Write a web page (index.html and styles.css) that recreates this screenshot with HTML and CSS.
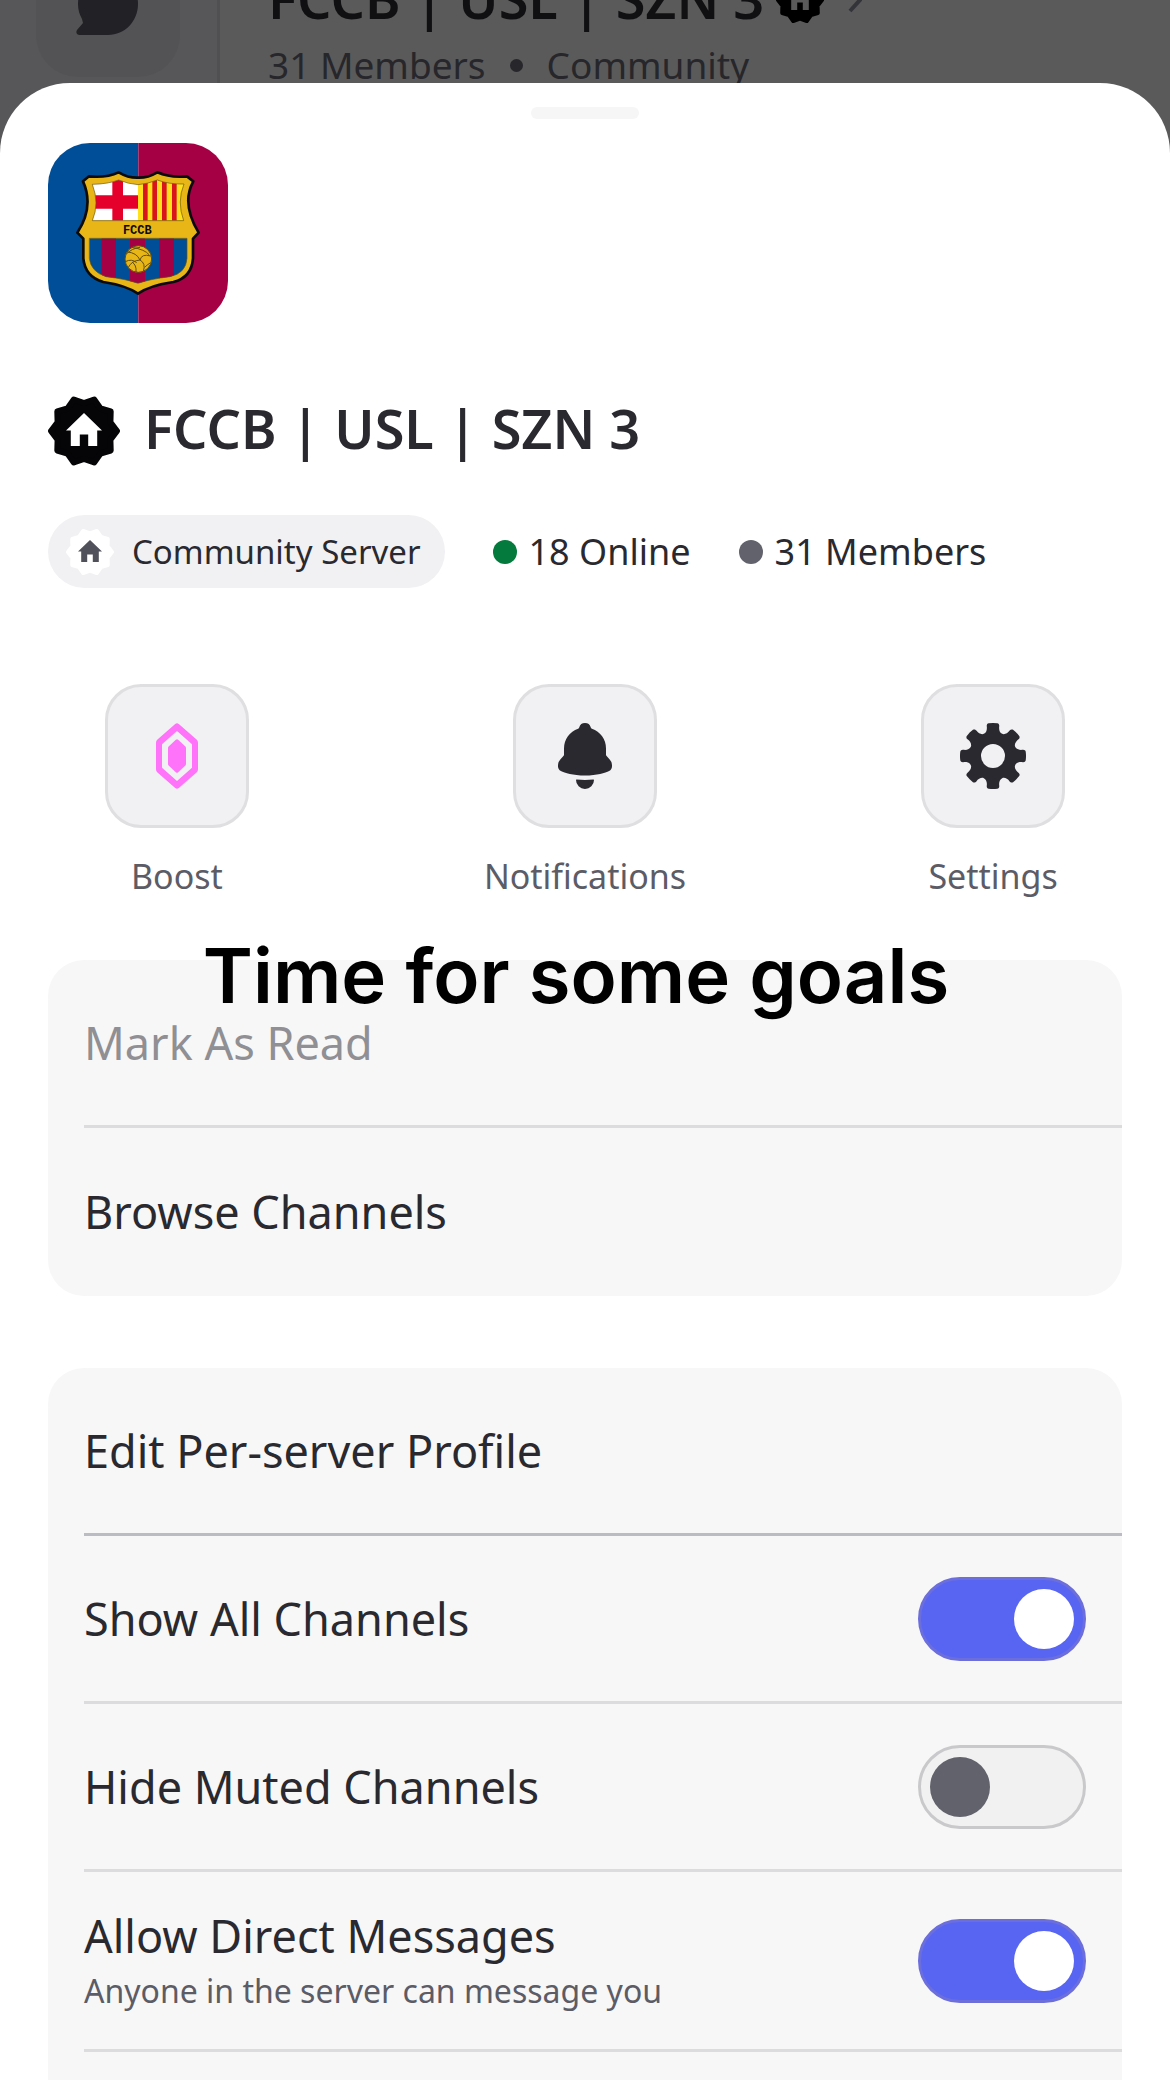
FILE: index.html
```html
<!DOCTYPE html>
<html lang="en">
<head>
    <meta charset="UTF-8">
    <meta name="viewport" content="width=device-width, initial-scale=1.0">
    <title>FCCB | USL | SZN 3</title>
    <link rel="stylesheet" href="styles.css">
</head>
<body>
    <!-- Shared icon shapes -->
    <svg class="defs" aria-hidden="true">
        <symbol id="badge" viewBox="0 0 24 24">
            <path stroke="currentColor" stroke-width="2" stroke-linejoin="round" fill="currentColor" d="M23 12 20.8 14.9 20.9 18.5 17.5 19.5 15.4 22.5 12 21.3 8.6 22.5 6.5 19.5 3.1 18.5 3.2 14.9 1 12 3.2 9.1 3.1 5.5 6.5 4.5 8.6 1.5 12 2.7 15.4 1.5 17.5 4.5 20.9 5.5 20.8 9.1Z"/>
            <path class="house" d="M12 6 18 11.8H16.4V17H13.4V13.2H10.6V17H7.6V11.8H6Z"/>
        </symbol>
    </svg>

    <!-- Dimmed page behind the sheet -->
    <div class="backdrop">
        <div class="rail">
            <div class="rail-tile">
                <svg class="chat-icon" viewBox="-2 0 62 62"><path d="M30 0C47 0 60 14 60 31S47 62 30 62H1Q-3 61-1 57L5 50 4 46Q0 39 0 31C0 14 13 0 30 0Z"/></svg>
            </div>
        </div>
        <div class="server-head">
            <div class="head-title">
                <span>FCCB | USL | SZN 3</span>
                <svg class="head-badge"><use href="#badge"/></svg>
                <svg class="chevron" viewBox="0 0 14 26"><path d="M2 2 12 13 2 24"/></svg>
            </div>
            <div class="head-sub"><span>31 Members</span><i class="bullet"></i><span>Community</span></div>
        </div>
    </div>

    <main class="sheet">
        <div class="handle"></div>

        <svg class="avatar" viewBox="24 39 540 540" role="img" aria-label="FCCB crest">
            <defs>
                <clipPath id="top"><path d="M157 163Q205 162 236 150Q265 162 294 164Q322 162 352 150Q385 163 432 162Q410 215 431 272H157Q179 220 157 163Z"/></clipPath>
                <clipPath id="bottom"><path d="M148 325H441V385Q438 430 390 440Q330 447 294 460Q258 447 198 440Q152 425 148 385Z"/></clipPath>
            </defs>
            <path fill="#004d98" d="M24 39H295V579H24Z"/>
            <path fill="#a50044" d="M295 39H564V579H295Z"/>
            <path fill="#e8b617" stroke="#0b0b0b" stroke-width="8" stroke-linejoin="round" d="M129 154 147 139Q200 144 236 127Q265 144 294 143Q323 144 352 127Q390 144 441 139L460 154Q423 220 476 308L459 326V385Q455 442 400 456Q330 466 294 491Q258 466 190 456Q135 440 130 385V326L112 308Q163 230 129 154Z"/>
            <g clip-path="url(#top)">
                <path fill="#fff" d="M150 145H294V272H150Z"/>
                <path fill="#e4002b" d="M217 145H249V272H217ZM150 196H294V236H150Z"/>
                <path fill="#ffe01b" d="M294 145H440V272H294Z"/>
                <path fill="#d8151c" d="M309 145H323V272H309ZM337 145H351V272H337ZM366 145H380V272H366ZM396 145H410V272H396Z"/>
            </g>
            <g clip-path="url(#bottom)">
                <path fill="#004d98" d="M140 320H450V465H140Z"/>
                <path fill="#a50044" d="M185 320H228V465H185ZM270 320H315V465H270ZM358 320H402V465H358Z"/>
            </g>
            <path fill="none" stroke="#6b560f" stroke-width="2" d="M157 163Q205 162 236 150Q265 162 294 164Q322 162 352 150Q385 163 432 162Q410 215 431 272H157Q179 220 157 163ZM148 325H441V385Q438 430 390 440Q330 447 294 460Q258 447 198 440Q152 425 148 385Z"/>
            <circle cx="295" cy="387" r="40" fill="#e8b617" stroke="#5f4d12" stroke-width="3"/>
            <path fill="none" stroke="#5f4d12" stroke-width="3" d="M258 373Q275 355 300 352M262 366Q290 368 300 390M275 352Q315 358 328 375M300 390Q305 370 332 378M300 390Q275 392 265 412M300 390Q318 400 310 424M256 395Q275 385 290 398M288 426Q290 405 276 396M332 398Q320 405 314 412"/>
            <text class="crest-text" x="292" y="313" text-anchor="middle">FCCB</text>
        </svg>

        <div class="title-row">
            <svg class="title-badge"><use href="#badge"/></svg>
            <h1>FCCB | USL | SZN 3</h1>
        </div>

        <div class="meta">
            <span class="pill"><svg class="pill-badge"><use href="#badge"/></svg>Community Server</span>
            <span class="stat"><i class="dot online"></i>18 Online</span>
            <span class="stat"><i class="dot"></i>31 Members</span>
        </div>

        <div class="actions">
            <button class="action">
                <span class="action-box">
                    <svg class="boost" viewBox="0 0 24 24"><path fill-rule="evenodd" d="M11.4 1.3Q12 .8 12.6 1.3L18.6 6.6Q19 7 19 7.6V16.4Q19 17 18.6 17.4L12.6 22.7Q12 23.2 11.4 22.7L5.4 17.4Q5 17 5 16.4V7.6Q5 7 5.4 6.6ZM12 3.7 7 8.1V15.9L12 20.3 17 15.9V8.1Z"/><path d="M11.6 6.6Q12 6.2 12.4 6.6L14.8 8.8Q15 9 15 9.3V14.7Q15 15 14.8 15.2L12.4 17.4Q12 17.8 11.6 17.4L9.2 15.2Q9 15 9 14.7V9.3Q9 9 9.2 8.8Z"/></svg>
                </span>
                Boost
            </button>
            <button class="action">
                <span class="action-box">
                    <svg viewBox="0 0 24 24"><path d="M9.7 2.89c.18-.07.32-.24.37-.43a2 2 0 0 1 3.86 0c.05.2.19.36.38.43A7 7 0 0 1 19 9.5v2.09c0 .12.05.24.13.33l1.1 1.22a3 3 0 0 1 .77 2.01v.28c0 .67-.34 1.29-.95 1.56-1.31.6-4 1.51-8.05 1.51-4.05 0-6.74-.91-8.05-1.5-.61-.28-.95-.9-.95-1.57v-.28a3 3 0 0 1 .77-2l1.1-1.23a.5.5 0 0 0 .13-.33V9.5a7 7 0 0 1 4.7-6.61ZM9.18 19.84A.16.16 0 0 0 9 20a3 3 0 1 0 6 0c0-.1-.09-.17-.18-.16a24.86 24.86 0 0 1-5.64 0Z"/></svg>
                </span>
                Notifications
            </button>
            <button class="action">
                <span class="action-box">
                    <svg viewBox="0 0 24 24"><path fill-rule="evenodd" d="M10.56 1.1c-.46.05-.7.53-.64.98.18 1.16-.19 2.2-.98 2.53-.8.33-1.79-.15-2.49-1.1-.27-.36-.78-.52-1.14-.24-.77.59-1.45 1.27-2.04 2.04-.28.36-.12.87.24 1.14.96.7 1.43 1.7 1.1 2.49-.33.8-1.37 1.16-2.53.98-.45-.07-.93.18-.99.64a11.1 11.1 0 0 0 0 2.88c.06.46.54.7.99.64 1.16-.18 2.2.19 2.53.98.33.8-.14 1.79-1.1 2.49-.36.27-.52.78-.24 1.14.59.77 1.27 1.45 2.04 2.04.36.28.87.12 1.14-.24.7-.95 1.7-1.43 2.49-1.1.8.33 1.16 1.37.98 2.53-.07.45.18.93.64.99a11.1 11.1 0 0 0 2.88 0c.46-.06.7-.54.64-.99-.18-1.16.19-2.2.98-2.53.8-.33 1.79.14 2.49 1.1.27.36.78.52 1.14.24.77-.59 1.45-1.27 2.04-2.04.28-.36.12-.87-.24-1.14-.96-.7-1.43-1.7-1.1-2.49.33-.8 1.37-1.16 2.53-.98.45.07.93-.18.99-.64a11.1 11.1 0 0 0 0-2.88c-.06-.46-.54-.7-.99-.64-1.16.18-2.2-.19-2.53-.98-.33-.8.14-1.79 1.1-2.49.36-.27.52-.78.24-1.14a11.07 11.07 0 0 0-2.04-2.04c-.36-.28-.87-.12-1.14.24-.7.96-1.7 1.43-2.49 1.1-.8-.33-1.16-1.37-.98-2.53.07-.45-.18-.93-.64-.99a11.1 11.1 0 0 0-2.88 0ZM16 12a4 4 0 1 1-8 0 4 4 0 0 1 8 0Z"/></svg>
                </span>
                Settings
            </button>
        </div>

        <div class="card">
            <p class="caption">Time for some goals</p>
            <button class="row" disabled>Mark As Read</button>
            <button class="row">Browse Channels</button>
        </div>

        <div class="card">
            <button class="row strong-line">Edit Per-server Profile</button>
            <label class="row"><span>Show All Channels</span><input class="toggle" type="checkbox" checked></label>
            <label class="row"><span>Hide Muted Channels</span><input class="toggle" type="checkbox"></label>
            <label class="row tall">
                <span>Allow Direct Messages<small>Anyone in the server can message you</small></span>
                <input class="toggle" type="checkbox" checked>
            </label>
            <div class="row"></div>
        </div>
    </main>
</body>
</html>
```
FILE: styles.css
```css
* {
    box-sizing: border-box;
}
html {
    height: 100%;
    overflow: hidden;
}
body {
    margin: 0;
    height: 100%;
    overflow: hidden;
    background-color: #5a5a5a;
    color: #29292f;
    font-family: "Noto Sans", sans-serif;
}
button {
    padding: 0;
    border: none;
    background: none;
    color: inherit;
    font-family: inherit;
    cursor: pointer;
}
.defs {
    position: absolute;
    width: 0;
    height: 0;
}
.house {
    fill: var(--house, #fff);
}
/* Dimmed page behind the sheet */
.backdrop {
    display: flex;
    height: 152px;
    overflow: hidden;
}
.rail {
    width: 220px;
    padding-left: 36px;
    background-color: #575759;
    border-right: 3px solid #505052;
}
.rail-tile {
    display: flex;
    justify-content: center;
    align-items: flex-end;
    width: 144px;
    height: 77px;
    padding: 0 3px 42px 0;
    border-radius: 0 0 42px 42px;
    background-color: #535355;
}
.chat-icon {
    flex: none;
    width: 62px;
    height: 62px;
    fill: #212126;
}
.server-head {
    margin: -38px 0 0 48px;
}
.head-title {
    display: flex;
    align-items: center;
    gap: 12px;
    height: 76px;
    font-size: 54px;
    font-weight: 600;
    color: #101013;
}
.head-title span {
    margin-bottom: 4px;
}
.head-badge {
    width: 48px;
    height: 48px;
    color: #000;
    --house: #5a5a5a;
}
.chevron {
    width: 14px;
    height: 26px;
    margin-left: 12px;
    fill: none;
    stroke: #33333a;
    stroke-width: 4;
}
.head-sub {
    display: flex;
    align-items: center;
    gap: 24px;
    font-size: 37px;
    line-height: 54px;
    color: #26262b;
}
.bullet {
    width: 13px;
    height: 13px;
    border-radius: 50%;
    background-color: #26262b;
}
/* Bottom sheet */
.sheet {
    position: relative;
    margin-top: -69px;
    padding: 24px 48px 0;
    border-radius: 70px 70px 0 0;
    background-color: #fff;
}
.handle {
    width: 108px;
    height: 12px;
    margin: 0 auto 24px;
    border-radius: 6px;
    background-color: #f6f6f6;
}
.avatar {
    display: block;
    width: 180px;
    height: 180px;
    border-radius: 42px;
}
.crest-text {
    font-family: "Liberation Sans Narrow", "Liberation Mono", monospace;
    font-size: 36px;
    font-weight: 700;
    fill: #0b0b0b;
}
.title-row {
    display: flex;
    align-items: center;
    gap: 24px;
    height: 72px;
    margin-top: 72px;
}
.title-badge {
    flex: none;
    width: 72px;
    height: 72px;
    color: #050507;
}
h1 {
    margin: 0 0 6px;
    font-size: 54px;
    line-height: 66px;
    font-weight: 600;
}
.meta {
    display: flex;
    align-items: center;
    gap: 48px;
    margin-top: 48px;
}
.pill {
    display: flex;
    align-items: center;
    gap: 18px;
    height: 73px;
    padding: 0 24px 0 18px;
    border-radius: 37px;
    background-color: #f1f1f3;
    font-size: 33px;
}
.pill-badge {
    width: 48px;
    height: 48px;
    color: #fff;
    --house: #50505a;
}
.stat {
    display: flex;
    align-items: center;
    gap: 12px;
    font-size: 36px;
}
.dot {
    width: 24px;
    height: 24px;
    border-radius: 50%;
    background-color: #62626c;
}
.dot.online {
    background-color: #047a3c;
}
.actions {
    display: flex;
    justify-content: space-between;
    margin-top: 96px;
}
.action {
    display: flex;
    flex-direction: column;
    align-items: center;
    gap: 24px;
    width: 24%;
    color: #5c5c66;
    font-size: 34px;
    line-height: 48px;
}
.action-box {
    display: flex;
    justify-content: center;
    align-items: center;
    width: 144px;
    height: 144px;
    border: 3px solid #dfdfe1;
    border-radius: 36px;
    background-color: #f1f1f3;
}
.action svg {
    width: 72px;
    height: 72px;
    fill: #29292f;
}
.action .boost {
    fill: #ff73fa;
}
/* Lists */
.card {
    position: relative;
    margin-top: 60px;
    padding-left: 36px;
    border-radius: 36px;
    background-color: #f7f7f7;
}
.card + .card {
    margin-top: 72px;
}
.row {
    display: flex;
    justify-content: space-between;
    align-items: center;
    width: 100%;
    height: 168px;
    padding-right: 36px;
    border-bottom: 3px solid #dcdcde;
    font-size: 45px;
    line-height: 60px;
    text-align: left;
}
.row:last-child {
    border-bottom: none;
}
.row:disabled {
    color: #8f8f94;
}
.strong-line {
    border-bottom-color: #bbbbc3;
}
.tall {
    height: 180px;
}
.row small {
    display: block;
    color: #5c5c66;
    font-size: 32px;
    line-height: 50px;
}
.toggle {
    appearance: none;
    flex: none;
    display: flex;
    align-items: center;
    width: 168px;
    height: 84px;
    margin: 0;
    padding: 0 9px;
    border: 3px solid #c9c9cb;
    border-radius: 42px;
    background-color: #f1f1f2;
}
.toggle::before {
    content: "";
    width: 60px;
    height: 60px;
    border-radius: 50%;
    background-color: #62626c;
}
.toggle:checked {
    justify-content: flex-end;
    border-color: #6c6edb;
    background-color: #5865f2;
}
.toggle:checked::before {
    background-color: #fff;
}
/* Caption lies over the first list */
.caption {
    position: absolute;
    top: -35px;
    left: 0;
    right: 18px;
    margin: 0;
    font-family: Inter, sans-serif;
    font-size: 76px;
    line-height: 100px;
    font-weight: 600;
    text-align: center;
    color: #000;
    pointer-events: none;
}
```
